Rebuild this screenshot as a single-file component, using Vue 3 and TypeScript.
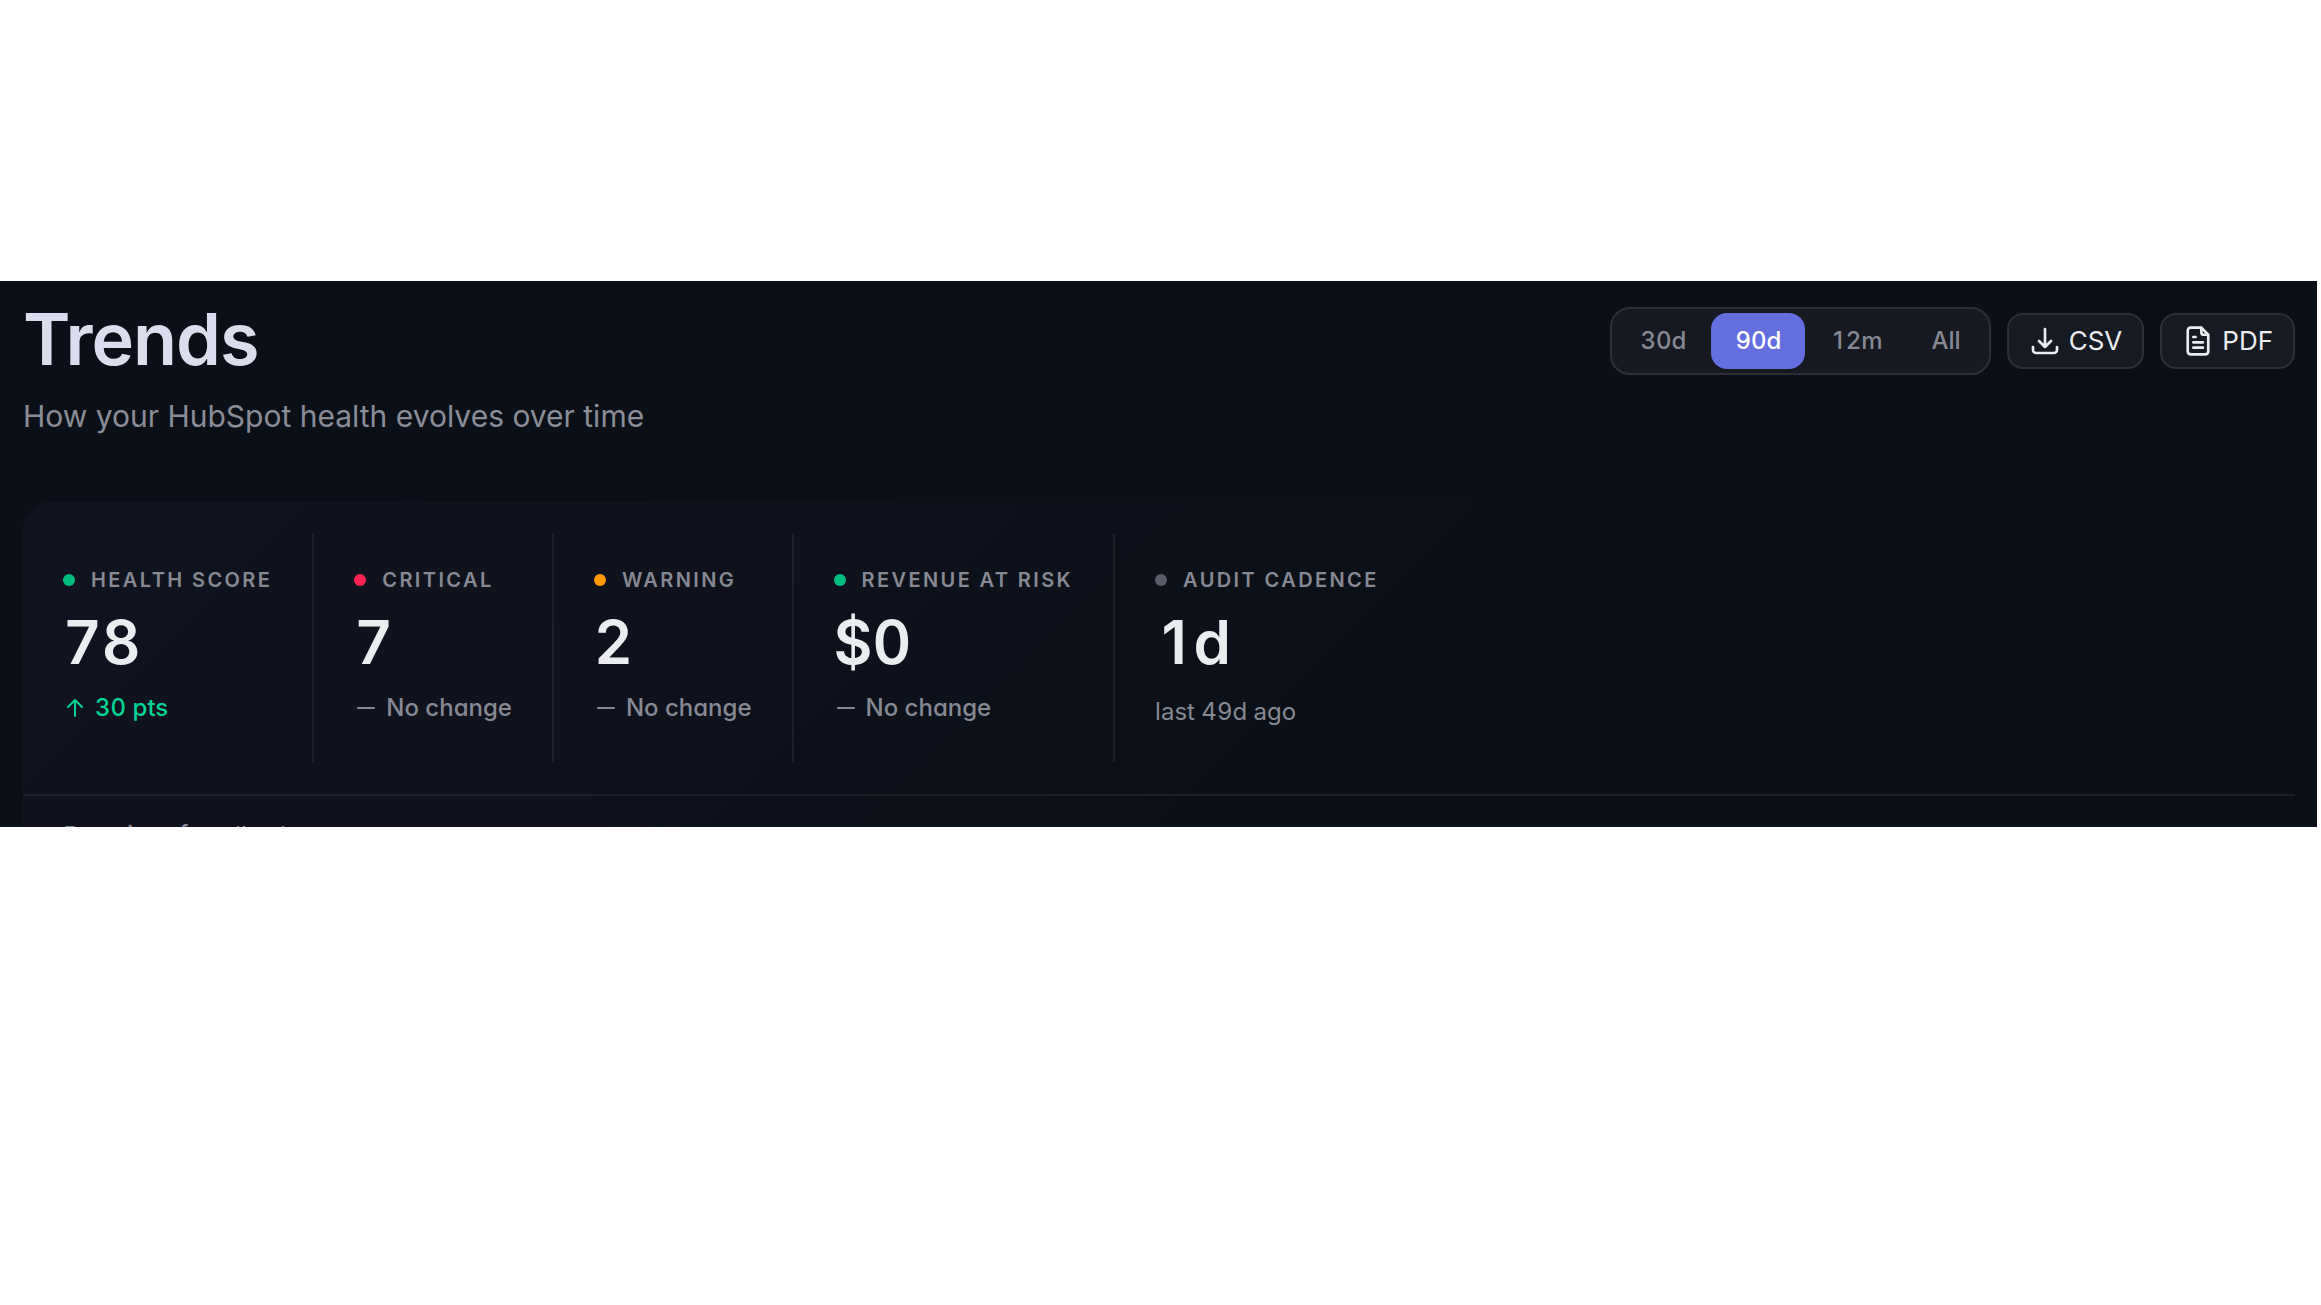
<script setup lang="ts">
import { ref } from 'vue'

interface Metric {
  label: string
  value: string
  tone: 'good' | 'critical' | 'warning' | 'muted'
  trend: 'up' | 'flat' | 'none'
  note: string
}

const ranges = ['30d', '90d', '12m', 'All']
const activeRange = ref('90d')

const metrics: Metric[] = [
  { label: 'Health score', value: '78', tone: 'good', trend: 'up', note: '30 pts' },
  { label: 'Critical', value: '7', tone: 'critical', trend: 'flat', note: 'No change' },
  { label: 'Warning', value: '2', tone: 'warning', trend: 'flat', note: 'No change' },
  { label: 'Revenue at risk', value: '$0', tone: 'good', trend: 'flat', note: 'No change' },
  { label: 'Audit cadence', value: '1d', tone: 'muted', trend: 'none', note: 'last 49d ago' },
]
</script>

<template>
  <main class="panel">
    <header class="head">
      <div>
        <h1>Trends</h1>
        <p class="subtitle">How your HubSpot health evolves over time</p>
      </div>
      <div class="tools">
        <div class="ranges" role="group" aria-label="Time range">
          <button
            v-for="range in ranges"
            :key="range"
            type="button"
            class="range"
            :class="{ active: range === activeRange }"
            :aria-pressed="range === activeRange"
            @click="activeRange = range"
          ><template v-if="range.startsWith('1')"><span class="one">1</span>{{ range.slice(1) }}</template><template v-else>{{ range }}</template></button>
        </div>
        <button type="button" class="export">
          <svg viewBox="0 0 24 24" aria-hidden="true">
            <path d="M3 16.5v2.25A2.25 2.25 0 0 0 5.25 21h13.5A2.25 2.25 0 0 0 21 18.75V16.5M16.5 12 12 16.5m0 0L7.5 12m4.5 4.5V3" />
          </svg>
          CSV
        </button>
        <button type="button" class="export">
          <svg viewBox="0 0 24 24" aria-hidden="true">
            <path d="M14.5 2H6.5A2.2 2.2 0 0 0 4.3 4.2v15.6A2.2 2.2 0 0 0 6.5 22h11a2.2 2.2 0 0 0 2.2-2.2V7.3L14.5 2v3.4a1.9 1.9 0 0 0 1.9 1.9h3.3M8.5 9h1.7M8.5 13h7.2M8.5 17h7.2" />
          </svg>
          PDF
        </button>
      </div>
    </header>

    <section class="card">
      <div class="metrics">
        <article v-for="metric in metrics" :key="metric.label" class="metric">
          <h2><span class="dot" :class="metric.tone"></span>{{ metric.label }}</h2>
          <p class="value"><template v-if="metric.value.startsWith('1')"><span class="one">1</span>{{ metric.value.slice(1) }}</template><template v-else>{{ metric.value }}</template></p>
          <p class="note" :class="metric.trend">
            <svg v-if="metric.trend !== 'none'" viewBox="0 0 24 24" aria-hidden="true">
              <path v-if="metric.trend === 'up'" d="M12 20V4M5 11l7-7 7 7" />
              <path v-else d="M4 12h16" />
            </svg>
            {{ metric.note }}
          </p>
        </article>
      </div>
      <p class="footnote">Premium for all rules</p>
    </section>
  </main>
</template>

<style>
body {
  background: #ffffff;
}
</style>

<style scoped>
.panel {
  box-sizing: border-box;
  height: 546px;
  margin: 281px 4px 0 0;
  padding: 22px 22px 0 23px;
  overflow: hidden;
  background: #0b1018;
  color: #ebecf0;
  font-family: Inter, sans-serif;
}

h1,
h2,
p {
  margin: 0;
}

.head {
  display: flex;
  justify-content: space-between;
  align-items: flex-start;
}

h1 {
  color: #dcddec;
  font-size: 72px;
  font-weight: 600;
  line-height: 72px;
  letter-spacing: -1px;
}

.subtitle {
  margin-top: 20px;
  color: #8a8d97;
  font-size: 30px;
  line-height: 42px;
}

.tools {
  display: flex;
  align-items: center;
  gap: 16px;
  margin-top: 4px;
}

.ranges {
  display: flex;
  gap: 1px;
  padding: 4px;
  border: 2px solid #2c2f38;
  border-radius: 20px;
  background: #161922;
}

button {
  height: 56px;
  font-family: inherit;
  font-size: 24px;
  font-weight: 500;
  line-height: 32px;
}

.range {
  padding: 0 24px;
  border: 0;
  border-radius: 16px;
  background: transparent;
  color: #868993;
  font-variant-numeric: tabular-nums;
}

.range.active {
  background: #636edf;
  color: #ffffff;
}

/* A plain "1" without a foot, centred in the width of a tabular digit. */
.one {
  display: inline-block;
  width: 0.64em;
  text-align: center;
  font-variant-numeric: normal;
}

.export {
  display: flex;
  align-items: center;
  gap: 8px;
  padding: 0 20px;
  border: 2px solid #2c2f38;
  border-radius: 16px;
  background: #161a22;
  color: #ebecf0;
  font-size: 26px;
  font-weight: 400;
}

svg {
  fill: none;
  stroke: currentColor;
  stroke-linecap: round;
  stroke-linejoin: round;
}

.export svg {
  width: 32px;
  height: 32px;
  stroke-width: 2;
}

.card {
  margin-top: 65px;
  border-radius: 28px 28px 0 0;
  background: linear-gradient(135deg, #0f1420 0%, #10121d 22%, #0d111b 38%, #0b1018 55%);
}

.metrics {
  display: flex;
  padding: 32px 0;
  border-bottom: 2px solid #1d2029;
}

.metric {
  padding: 36px 40px 32px;
  border-right: 2px solid #1d2029;
}

.metric:last-child {
  border-right: 0;
}

h2 {
  display: flex;
  align-items: center;
  gap: 16px;
  color: #868993;
  font-size: 20px;
  font-weight: 600;
  line-height: 20px;
  letter-spacing: 0.12em;
  text-transform: uppercase;
}

.dot {
  width: 12px;
  height: 12px;
  border-radius: 50%;
}

.good {
  background: #00bc7d;
}

.critical {
  background: #ff2056;
}

.warning {
  background: #fe9a00;
}

.muted {
  background: #5b5e68;
}

.value {
  margin-top: 22px;
  font-size: 60px;
  font-weight: 600;
  line-height: 60px;
  font-variant-numeric: tabular-nums;
}

.note {
  display: flex;
  align-items: center;
  gap: 8px;
  margin-top: 18px;
  color: #868993;
  font-size: 24px;
  font-weight: 500;
  line-height: 36px;
  font-feature-settings: "tnum", "cv11";
}

.note svg {
  width: 24px;
  height: 24px;
  stroke-width: 2;
}

.note.up {
  color: #00d492;
}

.note.none {
  margin-top: 22px;
  font-weight: 400;
  font-feature-settings: "tnum";
}

.footnote {
  padding: 22px 40px;
  color: #868993;
  font-size: 26px;
  line-height: 36px;
}
</style>
